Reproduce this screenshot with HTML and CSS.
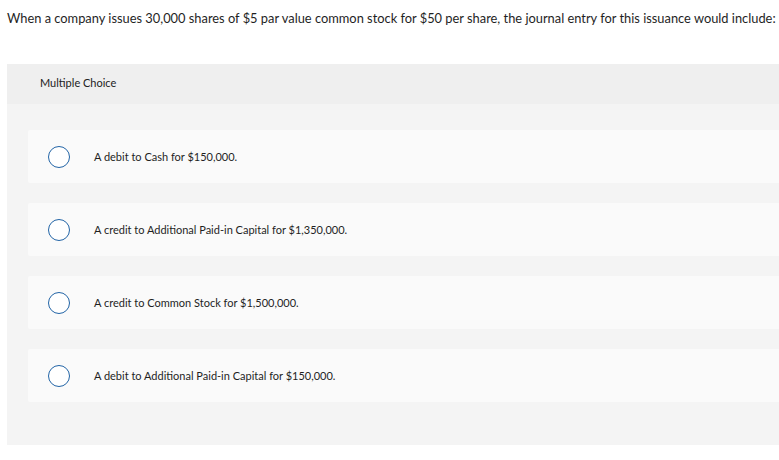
FILE: index.html
```html
<!DOCTYPE html>
<html>
<head>
<meta charset="utf-8">
<link rel="stylesheet" href="styles.css">
</head>
<body>
<p class="question">When a company issues 30,000 shares of $5 par value common stock for $50 per share, the journal entry for this issuance would include:</p>
<div class="mc">
  <div class="mc-head">Multiple Choice</div>
  <div class="mc-body">
    <div class="opt"><span class="radio"></span><span class="opt-text">A debit to Cash for $150,000.</span></div>
    <div class="opt"><span class="radio"></span><span class="opt-text">A credit to Additional Paid-in Capital for $1,350,000.</span></div>
    <div class="opt"><span class="radio"></span><span class="opt-text">A credit to Common Stock for $1,500,000.</span></div>
    <div class="opt"><span class="radio"></span><span class="opt-text">A debit to Additional Paid-in Capital for $150,000.</span></div>
  </div>
</div>
</body>
</html>
```
FILE: styles.css
```css
html, body {
  margin: 0;
  padding: 0;
  background: #ffffff;
}
body {
  font-family: Lato, "Liberation Sans", sans-serif;
  color: #222;
  overflow: hidden;
}
.question {
  margin: 0;
  padding: 10px 0 0 7px;
  font-size: 12.85px;
  line-height: 16px;
  white-space: nowrap;
  color: #1f1f1f;
}
.mc {
  margin: 38px 0 0 7px;
  background: #f4f4f4;
}
.mc-head {
  background: #efefef;
  height: 40px;
  box-sizing: border-box;
  padding: 12px 0 0 33px;
  font-size: 11px;
  line-height: 14px;
  color: #222;
}
.mc-body {
  padding: 26px 0 43px 21px;
  display: flex;
  flex-direction: column;
  gap: 20px;
}
.opt {
  background: #fafafa;
  height: 53px;
  display: flex;
  align-items: center;
  padding-left: 20px;
  border-radius: 2px 0 0 2px;
}
.radio {
  width: 20px;
  height: 20px;
  border: 1.5px solid #2264a6;
  border-radius: 50%;
  flex: none;
  background: #fff;
}
.opt-text {
  margin-left: 24px;
  font-size: 11px;
  color: #1f1f1f;
}
```
